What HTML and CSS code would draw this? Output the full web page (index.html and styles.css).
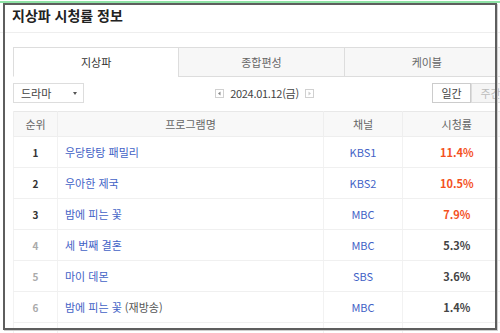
FILE: index.html
```html
<!DOCTYPE html>
<html lang="ko">
<head>
<meta charset="utf-8">
<title>지상파 시청률 정보</title>
<link rel="stylesheet" href="styles.css">
</head>
<body>
<div class="page">
  <header class="head"><h1 class="title">지상파 시청률 정보</h1></header>
  <div class="wrap">
    <div class="tabs">
      <div class="tab active">지상파</div>
      <div class="tab">종합편성</div>
      <div class="tab">케이블</div>
    </div>
    <div class="toolbar">
      <div class="select"><span>드라마</span><i class="caret"></i></div>
      <div class="datenav">
        <svg class="navbtn" width="9" height="9" viewBox="0 0 9 9"><rect x="0.5" y="0.5" width="8" height="8" fill="#fff" stroke="#d0d0d0"/><path d="M5.5 2.5 L3 4.5 L5.5 6.5 Z" fill="#888"/></svg>
        <span class="date">2024.01.12(금)</span>
        <svg class="navbtn" width="9" height="9" viewBox="0 0 9 9"><rect x="0.5" y="0.5" width="8" height="8" fill="#fff" stroke="#d0d0d0"/><path d="M3.5 2.5 L6 4.5 L3.5 6.5 Z" fill="#ccc"/></svg>
      </div>
      <div class="period">
        <div class="pbtn on">일간</div>
        <div class="pbtn">주간</div>
      </div>
    </div>
    <table class="rating">
      <colgroup><col class="c1"><col class="c2"><col class="c3"><col class="c4"></colgroup>
      <thead>
        <tr><th>순위</th><th>프로그램명</th><th>채널</th><th>시청률</th></tr>
      </thead>
      <tbody>
        <tr><td class="rank top">1</td><td class="prog">우당탕탕 패밀리</td><td class="ch">KBS1</td><td class="pct hot">11.4%</td></tr>
        <tr><td class="rank top">2</td><td class="prog">우아한 제국</td><td class="ch">KBS2</td><td class="pct hot">10.5%</td></tr>
        <tr><td class="rank top">3</td><td class="prog">밤에 피는 꽃</td><td class="ch">MBC</td><td class="pct hot">7.9%</td></tr>
        <tr><td class="rank">4</td><td class="prog">세 번째 결혼</td><td class="ch">MBC</td><td class="pct">5.3%</td></tr>
        <tr><td class="rank">5</td><td class="prog">마이 데몬</td><td class="ch">SBS</td><td class="pct">3.6%</td></tr>
        <tr><td class="rank">6</td><td class="prog">밤에 피는 꽃 <span class="re">(재방송)</span></td><td class="ch">MBC</td><td class="pct">1.4%</td></tr>
        <tr class="empty"><td></td><td></td><td></td><td></td></tr>
      </tbody>
    </table>
  </div>
</div>
<div class="greenline"></div>
<div class="frame"></div>
</body>
</html>
```
FILE: styles.css
```css
html, body {
  margin: 0;
  padding: 0;
  overflow: hidden;
  background: #fff;
}
body {
  width: 500px;
  height: 333px;
  position: relative;
  font-family: "Noto Sans CJK KR", "Noto Sans", sans-serif;
  color: #333;
}
.page {
  width: 520px;
}
.head {
  height: 32px;
  border-bottom: 1px solid #eeeeee;
  padding: 0 12px;
  box-sizing: content-box;
}
.title {
  margin: 0;
  padding-top: 5px;
  font-size: 14px;
  line-height: 20px;
  font-weight: 700;
  color: #222;
}
.wrap {
  margin-left: 13px;
  width: 497px;
  padding-top: 14px;
}
.tabs {
  display: flex;
  height: 30px;
}
.tab {
  flex: 1;
  display: flex;
  align-items: center;
  justify-content: center;
  font-size: 11px;
  color: #666;
  background: #f7f7f7;
  border-top: 1px solid #dddddd;
  border-left: 1px solid #dddddd;
  border-bottom: 1px solid #dddddd;
}
.tab:last-child { border-right: 1px solid #dddddd; }
.tab.active {
  background: #fff;
  color: #333;
  border-bottom-color: transparent;
}
.toolbar {
  display: grid;
  grid-template-columns: 1fr auto 1fr;
  align-items: center;
  margin-top: 6px;
  height: 20px;
}
.select {
  width: 71px;
  height: 20px;
  box-sizing: border-box;
  border: 1px solid #dddddd;
  display: flex;
  align-items: center;
  justify-content: space-between;
  padding: 0 6px 0 7px;
  font-size: 11px;
  color: #444;
}
.caret {
  width: 0;
  height: 0;
  border-left: 2.5px solid transparent;
  border-right: 2.5px solid transparent;
  border-top: 3px solid #555;
}
.datenav {
  display: flex;
  align-items: center;
  gap: 6px;
  margin-left: 6px;
}
.navbtn { display: block; }
.date {
  font-size: 11px;
  color: #444;
  letter-spacing: -0.3px;
}
.period {
  display: flex;
  justify-self: end;
}
.pbtn {
  width: 39px;
  height: 20px;
  box-sizing: border-box;
  border: 1px solid #dddddd;
  background: #f5f5f5;
  color: #bbb;
  font-size: 11px;
  display: flex;
  align-items: center;
  justify-content: center;
}
.pbtn.on {
  background: #fff;
  color: #444;
  border-color: #cccccc;
}
.rating {
  margin-top: 8px;
  width: 100%;
  border-collapse: collapse;
  table-layout: fixed;
  border-top: 1px solid #e8e8e8;
  border-left: 1px solid #eeeeee;
}
.c1 { width: 44px; }
.c2 { width: 266px; }
.c3 { width: 79px; }
.c4 { width: 108px; }
.rating th {
  height: 24px;
  padding: 0;
  background: #f8f8f8;
  font-size: 11px;
  font-weight: 400;
  color: #666;
  border-bottom: 1px solid #eeeeee;
  border-left: 1px solid #eeeeee;
}
.rating td {
  height: 30px;
  padding: 0;
  font-size: 11px;
  border-bottom: 1px solid #f0f0f0;
  border-left: 1px solid #f2f2f2;
  text-align: center;
}
.rating td.rank {
  font-size: 10px;
  font-weight: 700;
  color: #aaa;
}
.rating td.rank.top { color: #333; }
.rating td.prog {
  text-align: left;
  padding-left: 7px;
  color: #4262c6;
}
.re { color: #555; }
.rating td.ch { color: #4262c6; }
.rating td.pct {
  font-weight: 700;
  color: #444;
}
.rating td.pct.hot { color: #f4511e; }
.greenline {
  position: absolute;
  left: 0;
  top: 1px;
  width: 500px;
  height: 2px;
  background: #8fe3a6;
}
.frame {
  position: absolute;
  left: 3px;
  top: 3px;
  width: 494px;
  height: 327px;
  box-sizing: border-box;
  border: 2px solid #5e5e5e;
  box-shadow: 1px 1px 0 #cfcfcf;
  pointer-events: none;
}
```
